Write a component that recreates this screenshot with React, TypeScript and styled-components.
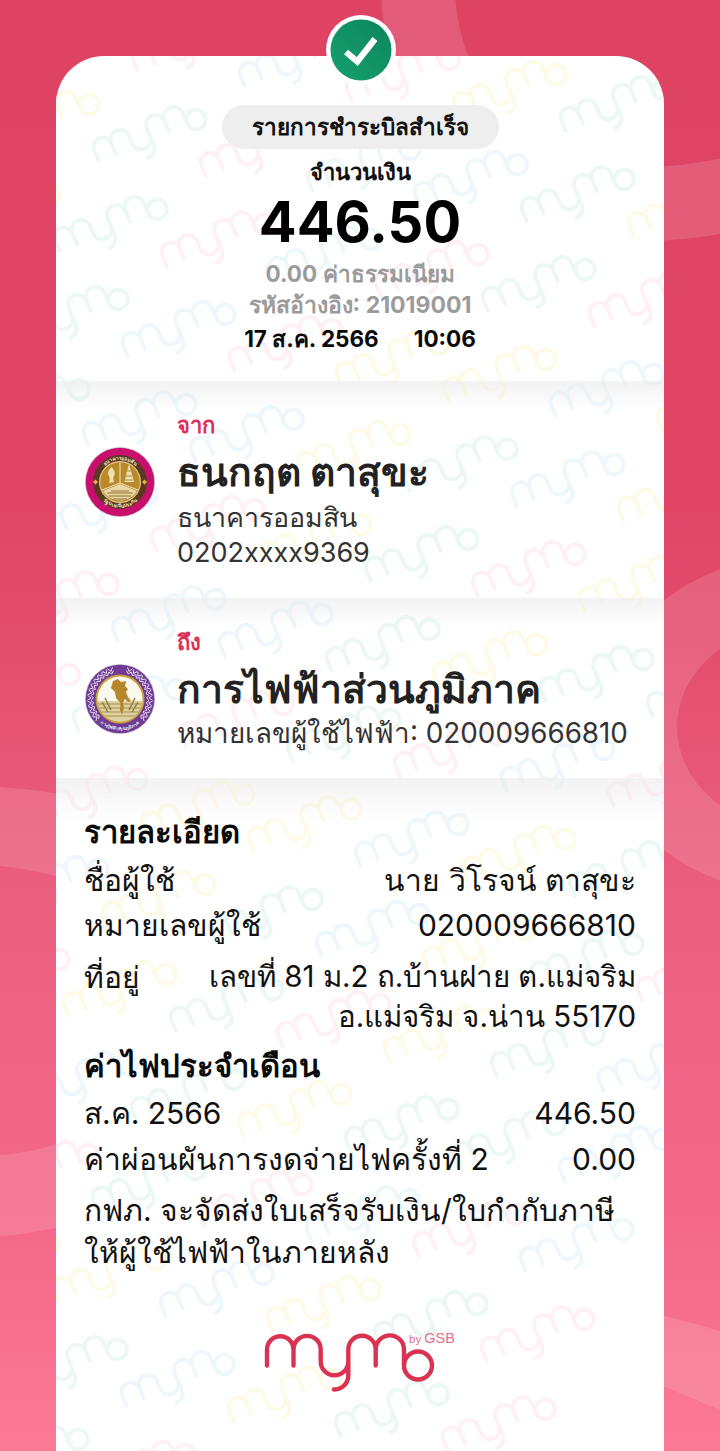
import React from "react";
import styled, { createGlobalStyle } from "styled-components";

const LOGO_PATH =
  "M1 30V14A13.2 13.2 0 0 1 27.5 14V30M27.5 14A13.6 13.6 0 0 1 54.7 14V26A13.8 13.8 0 0 0 82.3 26V14A13.7 13.7 0 0 1 109.7 14V30M109.7 14A14.1 14.1 0 0 1 138 14V30A14 14 0 1 0 166 30A14 14 0 1 0 138 30M82.3 26V40A14 14 0 0 1 68 54";

const Global = createGlobalStyle`
  html, body { margin: 0; padding: 0; }
  body { font-family: Inter, "Noto Sans", sans-serif; }
`;

const Page = styled.div`
  position: relative;
  width: 720px;
  height: 1451px;
  overflow: hidden;
  background: linear-gradient(180deg, #de4364 0%, #e04566 35%, #eb5f7f 62%, #f4698a 85%, #fb7a95 100%);
`;
const Blobs = styled.svg`
  position: absolute;
  inset: 0;
`;
const Card = styled.main`
  position: absolute;
  left: 56px;
  top: 56px;
  width: 608px;
  height: 1395px;
  background: #fff;
  border-radius: 48px 48px 0 0;
  overflow: hidden;
  display: flex;
  flex-direction: column;
`;
const Watermarks = styled.svg`
  position: absolute;
  left: 0;
  top: 0;
  pointer-events: none;
`;
const Badge = styled.svg`
  position: absolute;
  left: 326px;
  top: 14.5px;
`;
const Header = styled.header`
  position: relative;
  display: flex;
  flex-direction: column;
  align-items: center;
  padding: 49px 0 27px;
`;
const Pill = styled.div`
  width: 277px;
  height: 44px;
  border-radius: 22px;
  background: #eeeeee;
  display: flex;
  align-items: center;
  justify-content: center;
  font-size: 22.5px;
  font-weight: 700;
  color: #111;
`;
const AmountLabel = styled.div`
  margin-top: 8px;
  font-size: 22px;
  line-height: 30px;
  font-weight: 700;
  color: #111;
`;
const Amount = styled.div`
  margin-top: 3px;
  font-size: 56px;
  line-height: 64px;
  font-weight: 700;
  color: #000;
`;
const Muted = styled.div<{ $mt: number; $size: number }>`
  margin-top: ${(p) => p.$mt}px;
  font-size: ${(p) => p.$size}px;
  line-height: 30px;
  font-weight: 700;
  color: #9b9b9b;
`;
const DateLine = styled.div`
  margin-top: 4px;
  display: flex;
  gap: 35px;
  font-size: 22.5px;
  line-height: 30px;
  font-weight: 700;
  color: #0a0a0a;
`;
const Party = styled.section<{ $pad: number }>`
  position: relative;
  display: flex;
  gap: 22px;
  padding: 30px 29px ${(p) => p.$pad}px;
  background: linear-gradient(180deg, rgba(236, 236, 236, 0.65) 0, rgba(255, 255, 255, 0) 30px);
`;
const Seal = styled.svg`
  flex: none;
  margin-top: 36px;
`;
const PartyBody = styled.div`
  min-width: 0;
  display: flex;
  flex-direction: column;
`;
const PartyLabel = styled.div`
  font-size: 22px;
  line-height: 28px;
  font-weight: 700;
  color: #dc2f5a;
`;
const PartyName = styled.div`
  margin-top: 9px;
  font-size: 39px;
  line-height: 48px;
  font-weight: 700;
  color: #222;
  white-space: nowrap;
`;
const PartyLine = styled.div<{ $mt?: number; $size: number }>`
  margin-top: ${(p) => p.$mt ?? 0}px;
  font-size: ${(p) => p.$size}px;
  line-height: 36px;
  color: #333;
  white-space: nowrap;
`;
const Details = styled.section`
  position: relative;
  display: flex;
  flex-direction: column;
  padding: 36px 28px 0;
  background: linear-gradient(180deg, rgba(236, 236, 236, 0.65) 0, rgba(255, 255, 255, 0) 44px);
`;
const Heading = styled.h2<{ $mt?: number }>`
  margin: ${(p) => p.$mt ?? 0}px 0 0;
  font-size: 31px;
  line-height: 36px;
  font-weight: 700;
  color: #0a0a0a;
`;
const Row = styled.div<{ $mt: number }>`
  margin-top: ${(p) => p.$mt}px;
  display: flex;
  justify-content: space-between;
  font-size: 30px;
  line-height: 42px;
  color: #111;
  white-space: nowrap;
`;
const Address = styled.div`
  text-align: right;
  font-size: 29.5px;
  line-height: 40px;
`;
const Note = styled.p`
  margin: 9px 0 0;
  font-size: 30px;
  line-height: 42px;
  color: #111;
  white-space: nowrap;
`;
const LogoWrap = styled.div`
  position: relative;
  margin-top: 52px;
  display: flex;
  justify-content: center;
`;

const palette = ["#ecf8f5", "#fef0f3", "#edf7fc", "#fffae6"];
const seq = [0, 0, 1, 0, 1, 3, 2, 2, 3, 2, 1, 2, 3, 2, 3, 0, 1, 0, 2, 3, 1, 3, 0, 2, 0, 1, 2, 1, 3, 0, 2, 0, 3, 1, 2];

function marks() {
  const out: { x: number; y: number; c: string }[] = [];
  for (let r = -1; r < 15; r++) {
    for (let k = -3; k < 9; k++) {
      const x = 95 + 107 * k - 39 * r;
      const y = 81 + 15 * k + 90 * r;
      if (x < -70 || x > 680 || y < -50 || y > 1440) continue;
      const c = palette[seq[Math.abs(r * 7 + k * 3 + 17) % seq.length]];
      out.push({ x, y, c });
    }
  }
  return out;
}

function MarkLayer() {
  return (
    <Watermarks width="608" height="1395" viewBox="0 0 608 1395">
      {marks().map((m, i) => (
        <g key={i} transform={`translate(${m.x} ${m.y}) rotate(-23) scale(.7) translate(-83 -28)`}>
          <path d={LOGO_PATH} fill="none" stroke={m.c} strokeWidth="5.4" strokeLinecap="round" />
        </g>
      ))}
    </Watermarks>
  );
}

function GsbSeal() {
  return (
    <Seal width="70" height="70" viewBox="0 0 70 70">
      <defs>
        <path id="gsbTop" d="M13 35A22 22 0 0 1 57 35" />
        <path id="gsbBot" d="M9.5 35A25.5 25.5 0 0 0 60.5 35" />
      </defs>
      <circle cx="35" cy="35" r="34.6" fill="#c80f6e" stroke="#c9bfc4" strokeWidth=".6" />
      <circle cx="35" cy="35" r="27" fill="#5b391f" />
      <circle cx="35" cy="35" r="21" fill="#e4c98a" />
      <circle cx="35" cy="35" r="19.8" fill="#b98a2b" />
      <path d="M35 15.5V36M17 43L35 36L53 43" stroke="#f2e2b6" strokeWidth="1" fill="none" />
      <path d="M18 44L35 37L52 44A20 20 0 0 1 18 44Z" fill="#e9d7a6" />
      <path d="M22 46L48 46M24 49L46 49M28 52L42 52M26 44L44 44" stroke="#8a6320" strokeWidth=".9" />
      <path d="M26.5 20C23.5 23 22 26 24 29C25 31 25 33 24 36L29 35C28 32 28 31 29 29C31 26 29 23 26.5 20Z" fill="#f0e0b0" />
      <path d="M44 17L41.5 26L39.5 35H49L46.5 26Z" fill="#f0e0b0" />
      <path d="M42 24H46M41 29H47M40 33H48" stroke="#8a6320" strokeWidth=".7" />
      <path d="M8 35L10.5 32.5L13 35L10.5 37.5ZM57 35L59.5 32.5L62 35L59.5 37.5Z" fill="#e4b341" />
      <text fontSize="5" fontWeight="700" fill="#f0e3c0" fontFamily="Inter, sans-serif">
        <textPath href="#gsbTop" startOffset="50%" textAnchor="middle">ธนาคารออมสิน</textPath>
      </text>
      <text fontSize="5" fontWeight="700" fill="#f0e3c0" fontFamily="Inter, sans-serif">
        <textPath href="#gsbBot" startOffset="50%" textAnchor="middle">รัฐบาลเป็นประกัน</textPath>
      </text>
    </Seal>
  );
}

function PeaSeal() {
  const leaves: number[] = [];
  for (let i = 0; i < 12; i++) {
    leaves.push(18 + i * 10, -18 - i * 10);
  }
  return (
    <Seal width="70" height="70" viewBox="0 0 70 70">
      <defs>
        <path id="peaBot" d="M3.5 35A31.5 31.5 0 0 0 66.5 35" />
        <clipPath id="peaIn"><circle cx="35" cy="35" r="22.5" /></clipPath>
      </defs>
      <circle cx="35" cy="35" r="34.6" fill="#6f3b94" stroke="#c9bfd0" strokeWidth=".5" />
      {leaves.map((a, i) => (
        <g key={i} transform={`rotate(${a} 35 35)`}>
          <path d="M32.5 2.5L35 6L37.5 2.5M32.5 6L35 8.5L37.5 6" fill="none" stroke="#ece5f2" strokeWidth=".9" />
        </g>
      ))}
      <circle cx="35" cy="35" r="24.5" fill="#c9a13d" />
      <circle cx="35" cy="35" r="22.5" fill="#fbf8ee" />
      <g clipPath="url(#peaIn)">
        <rect x="10" y="37" width="50" height="22" fill="#ddd0a3" />
        <path d="M12 40H58M12 44H58M12 48H58M12 52H58" stroke="#b9a66a" strokeWidth="1.4" />
      </g>
      <path d="M28 17L33 15L36 18L41 17L40 22L43 25L41 28L43 33L46 37L43 38L40 35L38 38L39 44L37 51L35 46L35.5 39L31 34L30 28L26 24Z" fill="#b5862c" />
      <path d="M20 34L26 46M50 34L44 46M17 38L23 48M53 38L47 48" stroke="#8f7a3a" strokeWidth="1.4" />
      <text fontSize="4.6" fontWeight="700" fill="#f3eef7" fontFamily="Inter, sans-serif">
        <textPath href="#peaBot" startOffset="50%" textAnchor="middle">การไฟฟ้าส่วนภูมิภาค</textPath>
      </text>
    </Seal>
  );
}

export default function App() {
  return (
    <Page>
      <Global />
      <Blobs width="720" height="1451" viewBox="0 0 720 1451">
        <path d="M418 -10C420 110 520 245 740 192" fill="none" stroke="#fff" strokeOpacity=".13" strokeWidth="74" />
        <path fillRule="evenodd" fill="#fff" fillOpacity=".13" d="M600 725A200 170 0 0 1 1000 725A200 170 0 0 1 600 725ZM677 727A123 103 0 0 0 923 727A123 103 0 0 0 677 727Z" />
        <path fill="#fff" fillOpacity=".13" d="M0 787Q30 789 60 794L60 877Q30 869 0 866Z" />
        <path fill="#fff" fillOpacity=".13" d="M0 1155Q30 1153 60 1143L60 1227Q30 1234 0 1236Z" />
        <path fill="#fff" fillOpacity=".13" d="M660 1315Q690 1322 720 1331L720 1410Q690 1397 660 1385Z" />
      </Blobs>
      <Card>
        <MarkLayer />
        <Header>
          <Pill>รายการชำระบิลสำเร็จ</Pill>
          <AmountLabel>จำนวนเงิน</AmountLabel>
          <Amount>446.50</Amount>
          <Muted $mt={5} $size={22.5}>0.00 ค่าธรรมเนียม</Muted>
          <Muted $mt={1} $size={23}>รหัสอ้างอิง: 21019001</Muted>
          <DateLine>
            <span>17 ส.ค. 2566</span>
            <span>10:06</span>
          </DateLine>
        </Header>
        <Party $pad={27}>
          <GsbSeal />
          <PartyBody>
            <PartyLabel>จาก</PartyLabel>
            <PartyName>ธนกฤต ตาสุขะ</PartyName>
            <PartyLine $mt={3} $size={26.8}>ธนาคารออมสิน</PartyLine>
            <PartyLine $size={27}>0202xxxx9369</PartyLine>
          </PartyBody>
        </Party>
        <Party $pad={27}>
          <PeaSeal />
          <PartyBody>
            <PartyLabel>ถึง</PartyLabel>
            <PartyName>การไฟฟ้าส่วนภูมิภาค</PartyName>
            <PartyLine $mt={2} $size={27.8}>หมายเลขผู้ใช้ไฟฟ้า: 020009666810</PartyLine>
          </PartyBody>
        </Party>
        <Details>
          <Heading>รายละเอียด</Heading>
          <Row $mt={9}>
            <span>ชื่อผู้ใช้</span>
            <span>นาย วิโรจน์ ตาสุขะ</span>
          </Row>
          <Row $mt={3}>
            <span>หมายเลขผู้ใช้</span>
            <span>020009666810</span>
          </Row>
          <Row $mt={10}>
            <span>ที่อยู่</span>
            <Address>
              เลขที่ 81 ม.2 ถ.บ้านฝาย ต.แม่จริม
              <br />
              อ.แม่จริม จ.น่าน 55170
            </Address>
          </Row>
          <Heading $mt={12}>ค่าไฟประจำเดือน</Heading>
          <Row $mt={8}>
            <span>ส.ค. 2566</span>
            <span>446.50</span>
          </Row>
          <Row $mt={4}>
            <span>ค่าผ่อนผันการงดจ่ายไฟครั้งที่ 2</span>
            <span>0.00</span>
          </Row>
          <Note>
            กฟภ. จะจัดส่งใบเสร็จรับเงิน/ใบกำกับภาษี
            <br />
            ให้ผู้ใช้ไฟฟ้าในภายหลัง
          </Note>
          <LogoWrap>
            <svg width="210" height="72" viewBox="0 0 210 72">
              <g transform="translate(11 10.5)">
                <path d={LOGO_PATH} fill="none" stroke="#da3352" strokeWidth="4.4" strokeLinecap="round" />
              </g>
              <text x="154" y="18" fontFamily="'Liberation Sans', sans-serif" fill="#e9708c">
                <tspan fontSize="11.5">by </tspan>
                <tspan fontSize="14.5">GSB</tspan>
              </text>
            </svg>
          </LogoWrap>
        </Details>
      </Card>
      <Badge width="70" height="70" viewBox="0 0 70 70">
        <defs>
          <linearGradient id="badgeFill" x1="1" y1="0" x2="0" y2="1">
            <stop offset="0" stopColor="#0c855d" />
            <stop offset="1" stopColor="#17a06e" />
          </linearGradient>
        </defs>
        <circle cx="35" cy="35" r="35" fill="#fff" />
        <circle cx="35" cy="35" r="30.5" fill="url(#badgeFill)" />
        <path d="M20 37L31.3 46.5L49 24" fill="none" stroke="#fff" strokeWidth="6.2" />
      </Badge>
    </Page>
  );
}
